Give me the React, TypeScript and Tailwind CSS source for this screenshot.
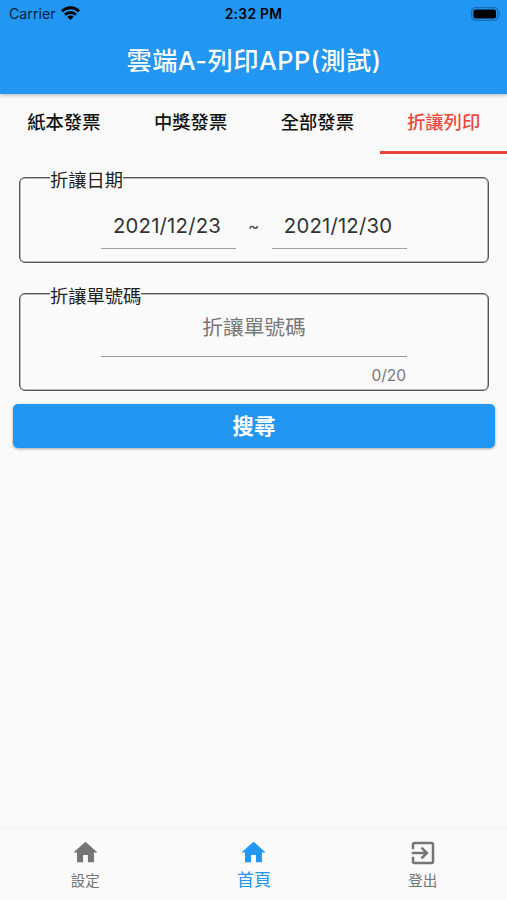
import React from 'react';

function HomeIcon() {
  return (
    <svg viewBox="0 0 24 24" className="size-[29px]" fill="currentColor">
      <path d="M10 20v-6h4v6h5v-8h3L12 3 2 12h3v8z" />
    </svg>
  );
}

function ExitIcon() {
  return (
    <svg viewBox="0 0 24 24" className="-mb-px h-[30px] w-[30px]" fill="currentColor">
      <path d="M10.09 15.59L11.5 17l5-5-5-5-1.41 1.41L12.67 11H3v2h9.67l-2.58 2.59zM19 3H5c-1.11 0-2 .9-2 2v4h2V5h14v14H5v-4H3v4c0 1.1.89 2 2 2h14c1.1 0 2-.9 2-2V5c0-1.1-.9-2-2-2z" />
    </svg>
  );
}

function StatusBar() {
  return (
    <div className="grid h-[27px] grid-cols-3 items-center text-black">
      <div className="flex items-center gap-[5px] pl-[9px] text-[14.2px] leading-[28px] text-black/80">
        <span>Carrier</span>
        <svg viewBox="0 0 19 14" className="mb-[2px] h-[14px] w-[19px]" fill="none" stroke="black" strokeWidth="2.9">
          <path d="M1 5.2 A12.3 12.3 0 0 1 18 5.2" />
          <path d="M4 8.7 A8 8 0 0 1 15 8.7" />
          <path d="M9.5 14 L6.4 10.9 A4.4 4.4 0 0 1 12.6 10.9 Z" fill="black" stroke="none" />
        </svg>
      </div>
      <div className="pt-px text-center text-[13.8px] font-semibold leading-[27px] tracking-[0.3px]">2:32 PM</div>
      <div className="flex justify-end pr-[6px]">
        <svg viewBox="0 0 30 14" className="h-[14px] w-[30px]">
          <rect x="0.7" y="0.7" width="26" height="12.6" rx="3.6" fill="none" stroke="#1a6cb0" strokeWidth="1.3" />
          <rect x="2.4" y="2.4" width="22.6" height="9.2" rx="2" fill="black" />
          <path d="M28 4.6 Q30 7 28 9.4Z" fill="#1a6cb0" />
        </svg>
      </div>
    </div>
  );
}

const tabs = ['紙本發票', '中獎發票', '全部發票', '折讓列印'];

function Group({ label, className, children }: { label: string; className: string; children: React.ReactNode }) {
  return (
    <section className={`relative ml-[19px] mr-[18px] rounded-[6px] border border-[#555] shadow-[inset_0_0_0_0.5px_#777] ${className}`}>
      <span className="absolute left-[30px] top-[-11px] bg-[#fafafa] text-[18.3px] leading-[26px] text-[#222]">
        {label}
      </span>
      {children}
    </section>
  );
}

function DateField({ value }: { value: string }) {
  return (
    <div className="h-[43px] w-[135px] border-b border-[#a0a0a0] pr-[3px] text-center text-[20.3px] leading-[40px] tracking-[0.2px] text-[#333]">
      {value}
    </div>
  );
}

export default function App() {
  return (
    <div className="flex h-[900px] w-[507px] flex-col overflow-hidden bg-[#fafafa] font-['Inter','Noto_Sans_CJK_TC',sans-serif]">
      <header className="z-10 h-[94px] shrink-0 bg-[#2196f3] shadow-[0_1px_4px_rgba(0,0,0,0.3)]">
        <StatusBar />
        <h1 className="pl-px text-center text-[25.2px] font-medium leading-[68px] tracking-[0.5px] text-white">
          雲端A-列印APP(測試)
        </h1>
      </header>

      <nav className="grid h-[59px] shrink-0 grid-cols-4 text-center text-[18.3px] font-medium leading-[57px]">
        {tabs.map((tab, i) => (
          <div key={tab} className={i === 3 ? 'border-b-[3px] border-[#e8443b] text-[#f0483e]' : 'pl-px text-[#111]'}>
            {tab}
          </div>
        ))}
      </nav>

      <main className="flex flex-1 flex-col pt-[24px]">
        <Group label="折讓日期" className="h-[86px]">
          <div className="flex justify-center pt-[28px]">
            <DateField value="2021/12/23" />
            <span className="w-[36px] pr-px text-center text-[17px] leading-[40px] text-[#444]">~</span>
            <DateField value="2021/12/30" />
          </div>
        </Group>

        <Group label="折讓單號碼" className="mt-[30px] h-[98px]">
          <div className="mx-auto w-[306px]">
            <div className="h-[63px] border-b border-[#999] pt-[15px] text-center text-[20.7px] leading-[38px] text-[#777]">
              折讓單號碼
            </div>
            <div className="pr-px text-right text-[15.5px] leading-[38px] text-[#777]">0/20</div>
          </div>
        </Group>

        <button className="ml-[13px] mr-[12px] mt-[13px] h-[44px] rounded-[5px] bg-[#2196f3] text-[21.5px] font-bold leading-[45px] text-white shadow-[0_1px_3px_rgba(0,0,0,0.35)]">
          搜尋
        </button>
      </main>

      <footer className="grid h-[74px] shrink-0 grid-cols-3 border-t-4 border-[#f4f4f4] pl-px text-[#757575]">
        <div className="flex flex-col items-center pt-[8px]">
          <HomeIcon />
          <span className="text-[14.5px] leading-[28px]">設定</span>
        </div>
        <div className="flex flex-col items-center pt-[8px] text-[#2196f3]">
          <HomeIcon />
          <span className="text-[17px] leading-[26px]">首頁</span>
        </div>
        <div className="flex flex-col items-center pt-[8px]">
          <ExitIcon />
          <span className="text-[14.5px] leading-[28px]">登出</span>
        </div>
      </footer>
    </div>
  );
}
